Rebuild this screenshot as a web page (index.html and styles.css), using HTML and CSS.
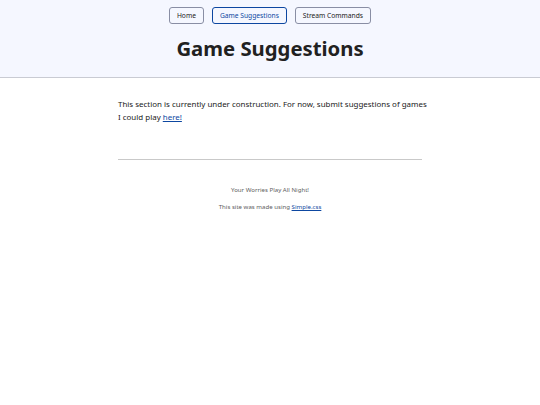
FILE: index.html
```
<!DOCTYPE html>
<html lang="en">
<head>
<meta charset="utf-8">
<title>Game Suggestions</title>
<link rel="stylesheet" href="styles.css">
</head>
<body>
<header class="site-header">
  <nav class="nav">
    <a class="nav-link" href="#">Home</a>
    <a class="nav-link current" href="#">Game Suggestions</a>
    <a class="nav-link" href="#">Stream Commands</a>
  </nav>
  <h1 class="title">Game Suggestions</h1>
</header>
<main class="content">
  <p class="intro">This section is currently under construction. For now, submit suggestions of games I could play <a href="#">here!</a></p>
</main>
<footer class="site-footer">
  <p class="foot-line">Your Worries Play All Night!</p>
  <p class="foot-line">This site was made using <a href="#">Simple.css</a></p>
</footer>
</body>
</html>
```
FILE: styles.css
```
html, body {
  margin: 0;
  padding: 0;
}
body {
  font-family: "Noto Sans", "DejaVu Sans", sans-serif;
  color: #212121;
  background: #fff;
  font-size: 7.95px;
  line-height: 13px;
}
a {
  color: #0d47a1;
}
.site-header {
  background: #f5f7ff;
  border-bottom: 1px solid #c9cbd3;
  height: 78px;
  box-sizing: border-box;
  display: flex;
  flex-direction: column;
  align-items: center;
}
.nav {
  display: flex;
  gap: 8px;
  margin-top: 7px;
}
.nav-link {
  display: block;
  font-size: 6.7px;
  line-height: 9px;
  padding: 3px 7px;
  border: 1px solid #898ea4;
  border-radius: 3px;
  color: #212121;
  text-decoration: none;
}
.nav-link.current {
  border-color: #0d47a1;
  color: #0d47a1;
}
.title {
  margin: 10px 0 0;
  font-size: 20.3px;
  line-height: 28px;
  font-weight: 700;
}
.content {
  width: 304px;
  margin: 0 auto;
  padding-top: 20px;
  padding-bottom: 35px;
  border-bottom: 1px solid #c9c9c9;
}
.intro {
  margin: 0 -8px 0 0;
}
.site-footer {
  text-align: center;
  color: #606060;
  font-size: 6.1px;
  line-height: 9px;
  padding-top: 25px;
}
.foot-line {
  margin: 0 0 8px;
}
```
